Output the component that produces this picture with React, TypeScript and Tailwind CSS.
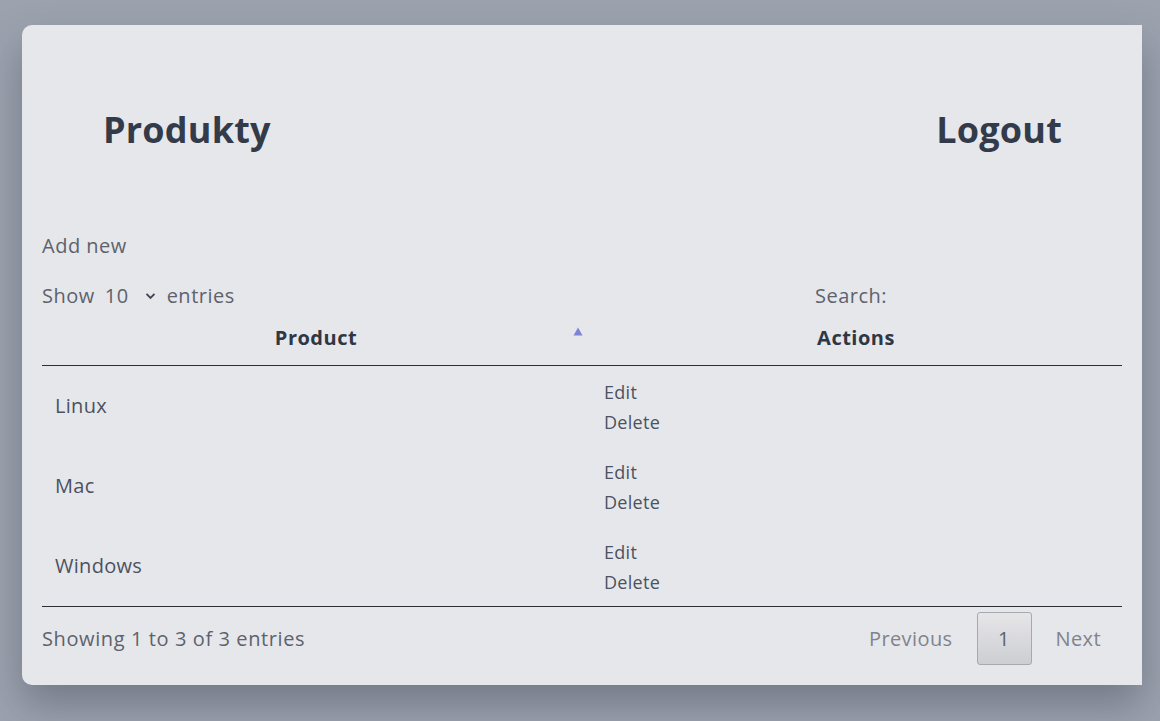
import React from "react";

const rows = ["Linux", "Mac", "Windows"];

export default function App() {
  return (
    <div
      className="min-h-screen w-full bg-[#9ca3af] pt-[25px] pl-[22px] overflow-hidden"
      style={{ fontFamily: '"Open Sans", "Noto Sans", sans-serif' }}
    >
      <div className="w-[1120px] h-[660px] bg-[#e6e7eb] rounded-l-[10px] shadow-[0_20px_40px_rgba(40,45,60,0.35)] px-5 flex flex-col">
        <header className="flex justify-between items-start pt-[85px] pl-[61px] pr-[60px]">
          <h1 className="text-[36px] leading-[40px] font-bold text-[#333b4a] tracking-[0.2px]">Produkty</h1>
          <a className="text-[36px] leading-[40px] font-bold text-[#333b4a] tracking-[0.2px]">Logout</a>
        </header>
        <div className="mt-[83px] text-[20px] leading-[26px] text-[#5d626c] tracking-[0.5px]">Add new</div>
        <div className="mt-[24px] flex justify-between items-center text-[20px] leading-[26px] text-[#5d626c] tracking-[0.5px]">
          <div className="flex items-center">
            <span>Show</span>
            <span className="ml-[10px]">10</span>
            <svg className="ml-[16px]" width="11" height="8" viewBox="0 0 11 8">
              <path d="M1.5 1.8 L5.5 5.8 L9.5 1.8" fill="none" stroke="#3f4551" strokeWidth="1.9" />
            </svg>
            <span className="ml-[11px]">entries</span>
          </div>
          <div className="w-[307px]">Search:</div>
        </div>
        <div className="flex h-[57px] items-center border-b border-[#2d2f36] text-[20px] font-bold text-[#2f3644] tracking-[0.5px]">
          <div className="relative w-[548px] text-center pt-[2px]">
            Product
            <svg className="absolute right-[7px] top-[6px]" width="10" height="9" viewBox="0 0 10 9">
              <path d="M5 0.5 L9.5 8.5 L0.5 8.5 Z" fill="#7f84d7" />
            </svg>
          </div>
          <div className="flex-1 text-center pt-[2px]">Actions</div>
        </div>
        <div className="border-b border-[#2d2f36] text-[#4b5261]">
          {rows.map((r) => (
            <div key={r} className="flex h-[80px] items-center">
              <div className="w-[548px] pl-[13px] text-[20px] tracking-[0.3px]">{r}</div>
              <div className="flex-1 pl-[14px] flex flex-col leading-[30px] text-[18px] tracking-[0.3px] pt-[1px]">
                <span>Edit</span>
                <span>Delete</span>
              </div>
            </div>
          ))}
        </div>
        <div className="flex justify-between items-center mt-[5px] text-[20px] text-[#5d626c] tracking-[0.6px]">
          <div>Showing 1 to 3 of 3 entries</div>
          <div className="flex items-center text-[#80838b] pr-[21px] tracking-[0.4px]">
            <span>Previous</span>
            <span className="ml-[24px] w-[55px] h-[53px] flex items-center justify-center rounded-[3px] border border-[#a8a9ae] bg-gradient-to-b from-[#e6e6e9] to-[#cdced2] text-[#5d626c]">1</span>
            <span className="ml-[24px]">Next</span>
          </div>
        </div>
      </div>
    </div>
  );
}
